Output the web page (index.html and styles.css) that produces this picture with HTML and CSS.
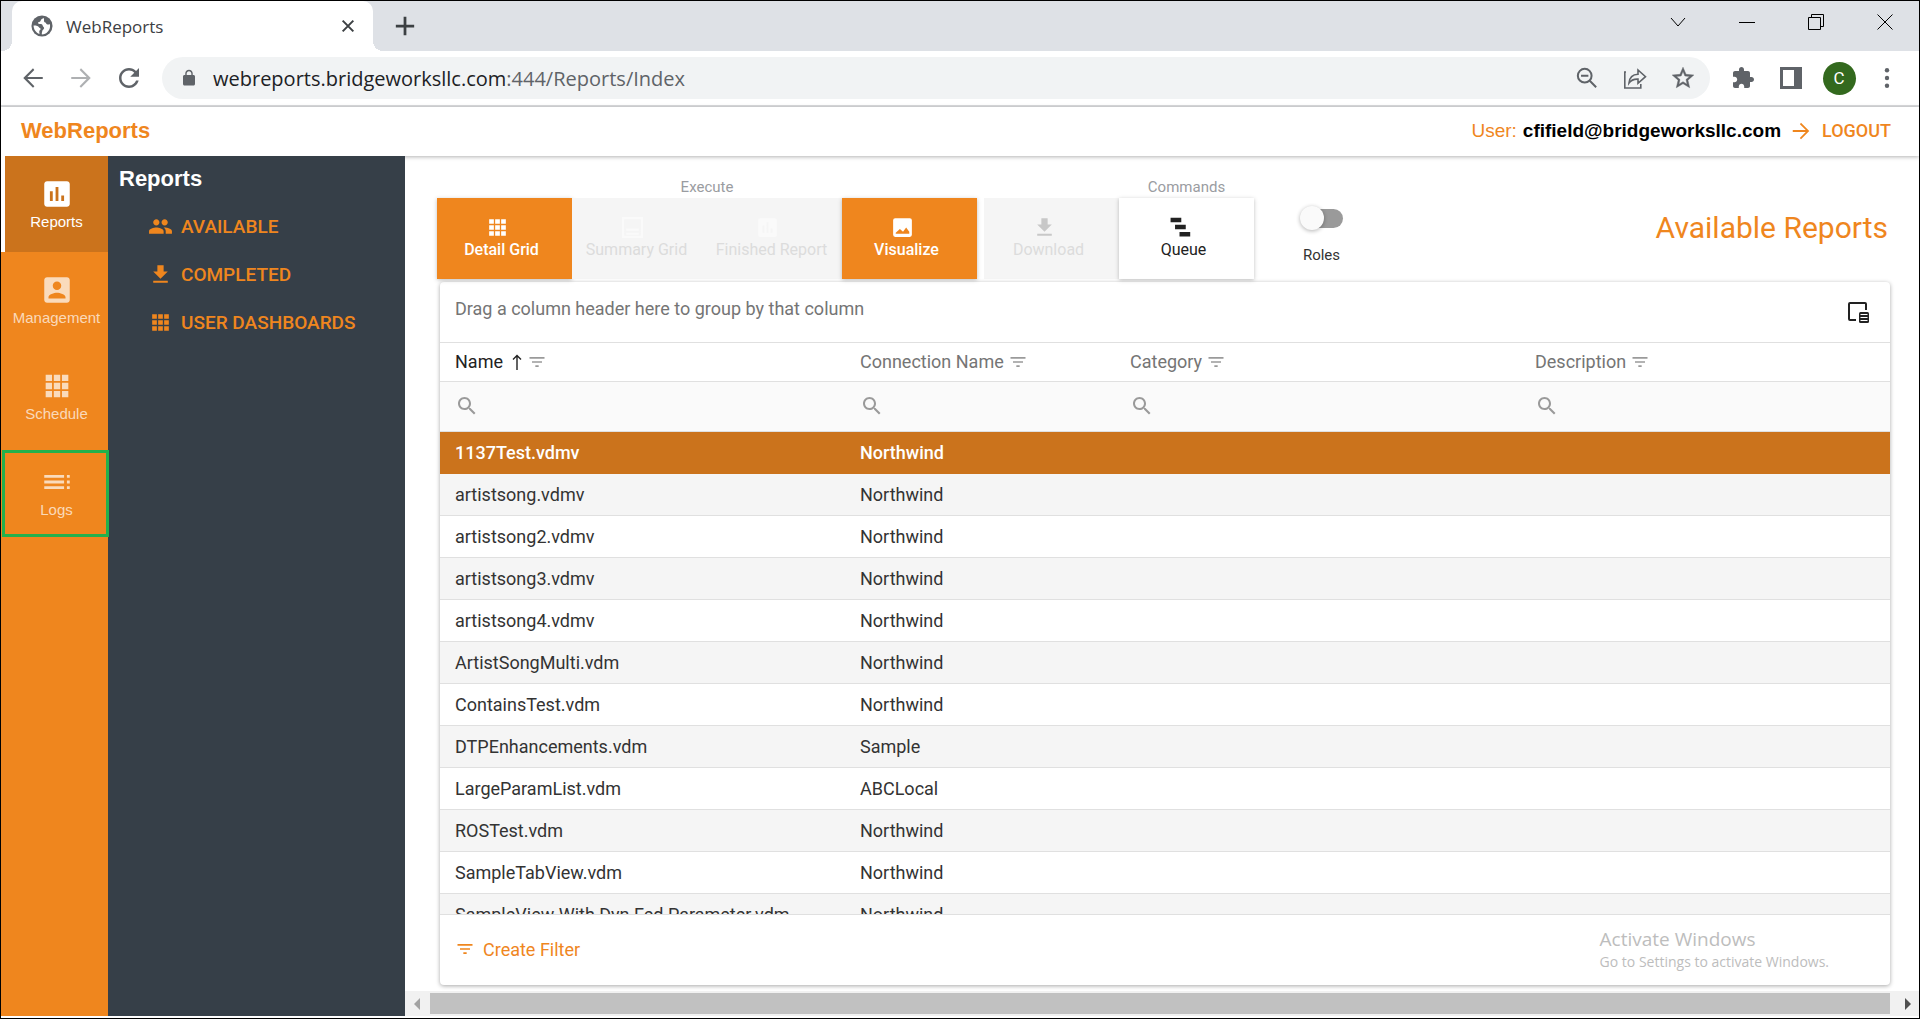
FILE: index.html
```html
<!DOCTYPE html>
<html lang="en">
<head>
  <meta charset="UTF-8" />
  <meta name="viewport" content="width=device-width, initial-scale=1.0"/>
  <title>WebReports</title>
  <link rel="stylesheet" href="styles.css">
</head>
<body>
  <!-- Icon shapes -->
  <svg class="sprite" aria-hidden="true">
    <symbol id="globe" viewBox="0 0 24 24"><circle cx="12" cy="12" r="11.500"/><path fill="#fff" d="M13.500 3c-.6 1.600-2.500 1.400-2.900 2.900-.3 1.300-1.600 1.400-2.600 1.900-1 .8.200 1.900 1.300 1.900 1.800-.1 3.200.3 3.400 1.700.2 1.500 1.800 1.700 1.600 3-.3 1.500-1.900 1.500-2 3-.1 1.300-.8 2-.4 3.900 5-.3 8.900-4.400 8.900-9.300 0-.8-.1-1.600-.3-2.300-1.200 1-3.300.9-3.900-.5-.4-1.200-1.600-.6-2.200-1.800-.7-1.500.600-2.400-.9-4.400zM2.800 11.500c2.200-.3 4.600.2 5.600 1.600.8 1.300 2.200 1 2.100 2.300-.1 1.200-1.700 1.300-1.500 3l.3 2.300c-3.800-1.200-6.400-4.800-6.500-9.200z"/></symbol>
    <symbol id="close" viewBox="0 0 24 24"><path fill="none" stroke="currentColor" stroke-width="3" d="M4 4l16 16M20 4L4 20"/></symbol>
    <symbol id="plus" viewBox="0 0 24 24"><path d="M10.500 2h3v8.500H22v3h-8.500V22h-3v-8.500H2v-3h8.500z"/></symbol>
    <symbol id="chevron" viewBox="0 0 16 16"><path fill="none" stroke="currentColor" d="M1 4l7 8 7-8"/></symbol>
    <symbol id="minimize" viewBox="0 0 16 16"><path d="M0 8h16v1H0z"/></symbol>
    <symbol id="restore" viewBox="0 0 16 16"><path fill="none" stroke="currentColor" d="M.5 3.500h12v12H.5zM3.500 3V.5h12v12H13"/></symbol>
    <symbol id="exit" viewBox="0 0 16 16"><path fill="none" stroke="currentColor" d="M.5 .5l15 15M15.500.5l-15 15"/></symbol>
    <symbol id="back" viewBox="0 0 24 24"><path d="M21 11H6.800l6.400-6.400L12 3l-9 9 9 9 1.300-1.500L6.800 13H21z"/></symbol>
    <symbol id="forward" viewBox="0 0 24 24"><path d="M3 11h14.200l-6.400-6.400L12 3l9 9-9 9-1.300-1.500 6.500-6.500H3z"/></symbol>
    <symbol id="reload" viewBox="0 0 24 24"><path d="M17.650 6.350C16.200 4.900 14.210 4 12 4c-4.420 0-7.990 3.580-7.990 8s3.570 8 7.990 8c3.730 0 6.840-2.550 7.730-6h-2.080c-.82 2.330-3.040 4-5.650 4-3.310 0-6-2.690-6-6s2.690-6 6-6c1.660 0 3.140.69 4.220 1.780L13 11h7V4l-2.350 2.350z"/></symbol>
    <symbol id="lock" viewBox="0 0 24 24"><path d="M18 8h-1V6c0-2.760-2.240-5-5-5S7 3.240 7 6v2H6c-1.100 0-2 .9-2 2v10c0 1.100.9 2 2 2h12c1.100 0 2-.9 2-2V10c0-1.100-.9-2-2-2zm-2.900 0H8.900V6c0-1.710 1.390-3.100 3.100-3.100s3.100 1.390 3.100 3.100v2z"/></symbol>
    <symbol id="zoom-out" viewBox="0 0 24 24"><g fill="none" stroke="currentColor" stroke-width="2.200"><circle cx="9.500" cy="9.500" r="7.500"/><path d="M5.500 9.500h8M15 15l7 7" /></g></symbol>
    <symbol id="share" viewBox="0 0 24 24"><path fill="none" stroke="currentColor" stroke-width="1.600" d="M3 6H1.800v16h16v-4M6 17c.5-5.500 3.500-8.500 9-8.700V4l7.500 6.700L15 17.300v-4.200c-4-.2-7 1-9 3.900z"/></symbol>
    <symbol id="star" viewBox="0 0 24 24"><path stroke="currentColor" stroke-width=".4" d="M22 9.240l-7.190-.62L12 2 9.190 8.630 2 9.240l5.460 4.730L5.820 21 12 17.270 18.180 21l-1.630-7.030L22 9.240zM12 15.400l-3.760 2.270 1-4.280-3.320-2.880 4.380-.38L12 6.100l1.710 4.040 4.380.38-3.320 2.880 1 4.280L12 15.400z"/></symbol>
    <symbol id="extension" viewBox="0 0 24 24"><path d="M20.500 11H19V7c0-1.100-.9-2-2-2h-4V3.500C13 2.120 11.880 1 10.500 1S8 2.120 8 3.500V5H4c-1.100 0-1.990.9-1.990 2v3.800H3.500c1.490 0 2.700 1.210 2.700 2.700s-1.210 2.700-2.700 2.700H2V20c0 1.100.9 2 2 2h3.800v-1.500c0-1.490 1.210-2.700 2.700-2.700 1.490 0 2.700 1.210 2.700 2.700V22H17c1.100 0 2-.9 2-2v-4h1.500c1.380 0 2.500-1.120 2.500-2.500S21.880 11 20.500 11z"/></symbol>
    <symbol id="sidepanel" viewBox="0 0 22 22"><path fill-rule="evenodd" d="M0 0h22v22H0zM3 3v16h11V3z"/></symbol>
    <symbol id="dots" viewBox="0 0 24 24"><circle cx="12" cy="3.500" r="2.400"/><circle cx="12" cy="12" r="2.400"/><circle cx="12" cy="20.500" r="2.400"/></symbol>
    <symbol id="chart" viewBox="0 0 24 24"><path d="M19 3H5c-1.100 0-2 .9-2 2v14c0 1.100.9 2 2 2h14c1.100 0 2-.9 2-2V5c0-1.100-.9-2-2-2zM9 17H7v-7h2v7zm4 0h-2V7h2v10zm4 0h-2v-4h2v4z"/></symbol>
    <symbol id="account" viewBox="0 0 24 24"><path d="M3 5v14c0 1.100.89 2 2 2h14c1.100 0 2-.9 2-2V5c0-1.100-.9-2-2-2H5c-1.110 0-2 .9-2 2zm12 4c0 1.660-1.340 3-3 3s-3-1.340-3-3 1.340-3 3-3 3 1.340 3 3zm-9 8c0-2 4-3.100 6-3.100s6 1.100 6 3.100v1H6v-1z"/></symbol>
    <symbol id="tiles" viewBox="0 0 24 24"><path d="M4 4h4.500v4.500H4zM9.750 4h4.500v4.500h-4.500zM15.500 4H20v4.500h-4.500zM4 9.750h4.500v4.500H4zM9.750 9.750h4.500v4.500h-4.500zM15.500 9.750H20v4.500h-4.500zM4 15.500h4.500V20H4zM9.750 15.500h4.500V20h-4.500zM15.500 15.500H20V20h-4.500z"/></symbol>
    <symbol id="toc" viewBox="0 0 24 24"><path d="M3 9h14V7H3v2zm0 4h14v-2H3v2zm0 4h14v-2H3v2zm16 0h2v-2h-2v2zm0-10v2h2V7h-2zm0 6h2v-2h-2v2z"/></symbol>
    <symbol id="people" viewBox="0 0 24 24"><path d="M16 11c1.660 0 2.990-1.340 2.990-3S17.660 5 16 5c-1.660 0-3 1.340-3 3s1.340 3 3 3zm-8 0c1.660 0 2.990-1.340 2.990-3S9.660 5 8 5C6.340 5 5 6.340 5 8s1.340 3 3 3zm0 2c-2.330 0-7 1.170-7 3.500V19h14v-2.500c0-2.330-4.670-3.500-7-3.500zm8 0c-.29 0-.62.02-.97.05 1.160.84 1.970 1.970 1.970 3.450V19h6v-2.500c0-2.330-4.670-3.500-7-3.500z"/></symbol>
    <symbol id="download" viewBox="0 0 24 24"><path d="M19 9h-4V3H9v6H5l7 7 7-7zM5 18v2h14v-2H5z"/></symbol>
    <symbol id="summary" viewBox="0 0 24 24"><path fill-rule="evenodd" d="M2 2h20v20H2zM4 4v16h16V4zM6 13h12v2H6zM6 17h12v2H6z"/></symbol>
    <symbol id="image" viewBox="0 0 24 24"><path fill-rule="evenodd" d="M5 3h14a2 2 0 0 1 2 2v14a2 2 0 0 1-2 2H5a2 2 0 0 1-2-2V5a2 2 0 0 1 2-2zM5.500 18h13v-2l-3-4-3 4-3-2.500-4 3.500z"/></symbol>
    <symbol id="queue" viewBox="0 0 28 28"><path d="M4 3h12v5H4zM9 11h12v5H9zM14 19h12v5H14z"/></symbol>
    <symbol id="filter" viewBox="0 0 24 24"><path d="M10 18h4v-2h-4v2zM3 6v2h18V6H3zm3 7h12v-2H6v2z"/></symbol>
    <symbol id="search" viewBox="0 0 24 24"><path d="M15.500 14h-.79l-.28-.27C15.410 12.590 16 11.110 16 9.500 16 5.910 13.090 3 9.500 3S3 5.910 3 9.500 5.910 16 9.500 16c1.610 0 3.090-.59 4.230-1.570l.27.28v.79l5 4.990L20.490 19l-4.990-5zm-6 0C7.010 14 5 11.990 5 9.500S7.010 5 9.500 5 14 7.010 14 9.500 11.990 14 9.500 14z"/></symbol>
    <symbol id="sort-up" viewBox="0 0 12 16"><path fill="none" stroke="currentColor" stroke-width="1.400" d="M6 16V2M2 5.500L6 1.500l4 4"/></symbol>
    <symbol id="chooser" viewBox="0 0 24 24"><path fill="none" stroke="currentColor" stroke-width="2" d="M10 20H4c-.6 0-1-.4-1-1V4c0-.6.4-1 1-1h15c.6 0 1 .4 1 1v6"/><rect x="13" y="12" width="10" height="11" rx="1.500"/><path stroke="#fff" d="M14.500 14.500h7M14.500 17.500h7M14.500 20.500h7"/></symbol>
  </svg>

  <div class="window">
    <!-- Tab strip -->
    <div class="tab-strip">
      <div class="tab">
        <svg class="icon-22"><use href="#globe"/></svg>
        <span class="tab-title">WebReports</span>
        <button class="tab-close" aria-label="Close tab"><svg class="icon-16"><use href="#close"/></svg></button>
      </div>
      <button class="new-tab" aria-label="New tab"><svg class="icon-22"><use href="#plus"/></svg></button>
      <div class="window-controls">
        <button aria-label="Search tabs"><svg class="icon-16"><use href="#chevron"/></svg></button>
        <button aria-label="Minimize"><svg class="icon-16"><use href="#minimize"/></svg></button>
        <button aria-label="Restore"><svg class="icon-16"><use href="#restore"/></svg></button>
        <button aria-label="Close"><svg class="icon-16"><use href="#exit"/></svg></button>
      </div>
    </div>

    <!-- Address bar -->
    <div class="toolbar">
      <button class="tool" aria-label="Back"><svg class="icon-26"><use href="#back"/></svg></button>
      <button class="tool faded" aria-label="Forward"><svg class="icon-26"><use href="#forward"/></svg></button>
      <button class="tool" aria-label="Reload"><svg class="icon-30"><use href="#reload"/></svg></button>
      <div class="address">
        <svg class="icon-18"><use href="#lock"/></svg>
        <span class="url">webreports.bridgeworksllc.com<span class="url-path">:444/Reports/Index</span></span>
        <button class="tool" aria-label="Zoom out"><svg class="icon-22"><use href="#zoom-out"/></svg></button>
        <button class="tool" aria-label="Share"><svg class="icon-24"><use href="#share"/></svg></button>
        <button class="tool" aria-label="Bookmark"><svg class="icon-26"><use href="#star"/></svg></button>
      </div>
      <button class="tool" aria-label="Extensions"><svg class="icon-24"><use href="#extension"/></svg></button>
      <button class="tool" aria-label="Side panel"><svg class="icon-22"><use href="#sidepanel"/></svg></button>
      <button class="tool" aria-label="Profile"><span class="avatar">C</span></button>
      <button class="tool" aria-label="Menu"><svg class="icon-22"><use href="#dots"/></svg></button>
    </div>

    <!-- App header -->
    <header class="app-header">
      <h1>WebReports</h1>
      <div class="account">
        <span>User:</span>
        <strong>cfifield@bridgeworksllc.com</strong>
        <a class="logout" href="#"><svg class="icon-22"><use href="#forward"/></svg>LOGOUT</a>
      </div>
    </header>

    <div class="app">
      <nav class="rail">
        <a class="rail-item active" href="#"><svg class="icon-34"><use href="#chart"/></svg>Reports</a>
        <a class="rail-item" href="#"><svg class="icon-34"><use href="#account"/></svg>Management</a>
        <a class="rail-item" href="#"><svg class="icon-34"><use href="#tiles"/></svg>Schedule</a>
        <a class="rail-item marked" href="#"><svg class="icon-34"><use href="#toc"/></svg>Logs</a>
      </nav>

      <aside class="panel">
        <h2>Reports</h2>
        <a class="panel-link" href="#"><svg class="icon-25"><use href="#people"/></svg>AVAILABLE</a>
        <a class="panel-link" href="#"><svg class="icon-25"><use href="#download"/></svg>COMPLETED</a>
        <a class="panel-link" href="#"><svg class="icon-25"><use href="#tiles"/></svg>USER DASHBOARDS</a>
      </aside>

      <main class="content">
        <div class="commands">
          <section class="group">
            <h3>Execute</h3>
            <div class="buttons">
              <button class="command primary"><svg class="icon-25"><use href="#tiles"/></svg>Detail Grid</button>
              <button class="command pale" disabled><svg class="icon-25"><use href="#summary"/></svg>Summary Grid</button>
              <button class="command pale" disabled><svg class="icon-25"><use href="#chart"/></svg>Finished Report</button>
              <button class="command primary"><svg class="icon-25"><use href="#image"/></svg>Visualize</button>
            </div>
          </section>
          <section class="group">
            <h3>Commands</h3>
            <div class="buttons">
              <button class="command" disabled><svg class="icon-25"><use href="#download"/></svg>Download</button>
              <button class="command raised"><svg class="icon-25"><use href="#queue"/></svg>Queue</button>
              <label class="roles"><input class="switch" type="checkbox" role="switch">Roles</label>
            </div>
          </section>
          <h2 class="page-title">Available Reports</h2>
        </div>

        <!-- Report grid -->
        <div class="grid">
          <div class="group-bar">
            <span>Drag a column header here to group by that column</span>
            <button aria-label="Column chooser"><svg class="icon-24"><use href="#chooser"/></svg></button>
          </div>
          <div class="rows">
            <table>
              <colgroup>
                <col class="col-wide"><col class="col-medium"><col class="col-wide"><col>
              </colgroup>
              <thead>
                <tr class="titles">
                  <th class="sorted">Name<svg class="sort"><use href="#sort-up"/></svg><svg class="icon-20"><use href="#filter"/></svg></th>
                  <th>Connection Name<svg class="icon-20"><use href="#filter"/></svg></th>
                  <th>Category<svg class="icon-20"><use href="#filter"/></svg></th>
                  <th>Description<svg class="icon-20"><use href="#filter"/></svg></th>
                </tr>
                <tr class="filters">
                  <td><label><svg class="icon-24"><use href="#search"/></svg><input type="text" aria-label="Filter name"></label></td>
                  <td><label><svg class="icon-24"><use href="#search"/></svg><input type="text" aria-label="Filter connection name"></label></td>
                  <td><label><svg class="icon-24"><use href="#search"/></svg><input type="text" aria-label="Filter category"></label></td>
                  <td><label><svg class="icon-24"><use href="#search"/></svg><input type="text" aria-label="Filter description"></label></td>
                </tr>
              </thead>
              <tbody>
                <tr class="selected"><td>1137Test.vdmv</td><td>Northwind</td><td></td><td></td></tr>
                <tr><td>artistsong.vdmv</td><td>Northwind</td><td></td><td></td></tr>
                <tr><td>artistsong2.vdmv</td><td>Northwind</td><td></td><td></td></tr>
                <tr><td>artistsong3.vdmv</td><td>Northwind</td><td></td><td></td></tr>
                <tr><td>artistsong4.vdmv</td><td>Northwind</td><td></td><td></td></tr>
                <tr><td>ArtistSongMulti.vdm</td><td>Northwind</td><td></td><td></td></tr>
                <tr><td>ContainsTest.vdm</td><td>Northwind</td><td></td><td></td></tr>
                <tr><td>DTPEnhancements.vdm</td><td>Sample</td><td></td><td></td></tr>
                <tr><td>LargeParamList.vdm</td><td>ABCLocal</td><td></td><td></td></tr>
                <tr><td>ROSTest.vdm</td><td>Northwind</td><td></td><td></td></tr>
                <tr><td>SampleTabView.vdm</td><td>Northwind</td><td></td><td></td></tr>
                <tr><td>SampleView With Dyn Fed Parameter.vdm</td><td>Northwind</td><td></td><td></td></tr>
              </tbody>
            </table>
          </div>
          <div class="filter-panel">
            <button class="create-filter"><svg class="icon-20"><use href="#filter"/></svg>Create Filter</button>
          </div>
        </div>

        <div class="scrollbar">
          <span class="arrow arrow-left"></span>
          <span class="thumb"></span>
          <span class="arrow arrow-right"></span>
        </div>
      </main>
    </div>

    <!-- Desktop watermark -->
    <div class="watermark">
      <p class="watermark-title">Activate Windows</p>
      <p>Go to Settings to activate Windows.</p>
    </div>
  </div>
</body>
</html>
```

FILE: styles.css
```css
* {
  box-sizing: border-box;
}

body {
  margin: 0;
  background-color: #fff;
  font-family: Roboto, sans-serif;
  font-size: 18px;
  color: #333;
}

h1, h2, h3, p {
  margin: 0;
}

a {
  text-decoration: none;
}

button {
  padding: 0;
  border: none;
  background: none;
  font-family: inherit;
  color: inherit;
  cursor: pointer;
}

svg {
  fill: currentColor;
  flex: none;
}

.sprite {
  display: none;
}

.icon-16 { width: 16px; height: 16px; }
.icon-18 { width: 18px; height: 18px; }
.icon-20 { width: 20px; height: 20px; }
.icon-22 { width: 22px; height: 22px; }
.icon-24 { width: 24px; height: 24px; }
.icon-25 { width: 25px; height: 25px; }
.icon-26 { width: 26px; height: 26px; }
.icon-30 { width: 30px; height: 30px; }
.icon-34 { width: 34px; height: 34px; }

.window {
  position: relative;
  display: flex;
  flex-direction: column;
  height: calc(100vh - 1px);
  padding-bottom: 2px;
  border: 1px solid #000;
}

/* Browser tabs */
.tab-strip {
  display: flex;
  height: 50px;
  padding-left: 11px;
  background-color: #dee1e6;
  color: #3c4043;
}

.tab {
  position: relative;
  display: flex;
  align-items: center;
  width: 361px;
  padding: 0 17px 0 19px;
  border-radius: 10px 10px 0 0;
  background-color: #fff;
  font-family: "Open Sans", sans-serif;
  font-size: 17px;
}

/* Flared feet of the active tab */
.tab::before,
.tab::after {
  content: "";
  position: absolute;
  bottom: 0;
  width: 10px;
  height: 10px;
}

.tab::before {
  right: 100%;
  background: radial-gradient(circle at 0 0, transparent 10px, #fff 10px);
}

.tab::after {
  left: 100%;
  background: radial-gradient(circle at 100% 0, transparent 10px, #fff 10px);
}

.tab > svg {
  color: #5f6368;
}

.tab-title {
  flex: 1;
  margin-left: 13px;
}

.tab-close {
  display: flex;
}

.new-tab {
  display: flex;
  align-items: center;
  margin-left: 21px;
}

.window-controls {
  display: flex;
  margin-left: auto;
  height: 41px;
  color: #000;
}

.window-controls button {
  width: 69px;
}

.window-controls svg {
  display: block;
  margin: auto;
}

.toolbar {
  display: flex;
  align-items: center;
  height: 56px;
  padding: 0 8px;
  border-bottom: 2px solid #dadbdd;
  color: #5f6368;
}

.tool {
  display: flex;
  align-items: center;
  justify-content: center;
  width: 48px;
  height: 42px;
}

.faded {
  opacity: 0.5;
}

.address {
  display: flex;
  align-items: center;
  flex: 1;
  height: 42px;
  margin: 0 9px;
  padding: 0 3px 0 18px;
  border-radius: 21px;
  background-color: #f1f3f4;
}

.url {
  flex: 1;
  margin-left: 15px;
  font-family: "Open Sans", sans-serif;
  font-size: 20px;
  color: #202124;
}

.url-path {
  color: #5f6368;
}

.avatar {
  width: 33px;
  border-radius: 50%;
  background-color: #33691e;
  color: #fff;
  font-size: 17px;
  line-height: 33px;
}

/* Application header */
.app-header {
  z-index: 1;
  display: flex;
  justify-content: space-between;
  align-items: center;
  height: 49px;
  padding: 0 28px 2px 20px;
  background-color: #fff;
  box-shadow: 0 1px 4px rgba(0, 0, 0, 0.3);
  font-family: "Liberation Sans", Arial, sans-serif;
  font-size: 19px;
  color: #ef861e;
}

.app-header h1 {
  font-size: 22px;
}

.account {
  display: flex;
  align-items: center;
  gap: 6px;
}

.account strong {
  color: #000;
}

.logout {
  display: flex;
  align-items: center;
  gap: 10px;
  margin-left: 3px;
  font-family: Roboto, sans-serif;
  font-size: 18px;
  font-weight: 500;
  color: #ef861e;
}

.app {
  display: flex;
  flex: 1;
  min-height: 0;
}

.rail {
  position: relative;
  z-index: 2;
  width: 107px;
  background-color: #ef861e;
  font-family: "Liberation Sans", Arial, sans-serif;
  font-size: 15px;
}

.rail-item {
  display: flex;
  flex-direction: column;
  align-items: center;
  gap: 2px;
  height: 96px;
  padding: 21px 0 0 4px;
  color: rgba(255, 255, 255, 0.7);
}

.rail-item.active {
  border-left: 4px solid #fff;
  padding-left: 0;
  background-color: #cb731c;
  color: #fff;
}

.rail-item.marked {
  height: 87px;
  margin: 6px -1px 0 1px;
  padding: 12px 0 0 2px;
  border: 3px solid #22b14c;
}

.panel {
  position: relative;
  z-index: 1;
  width: 297px;
  padding: 10px 11px;
  background-color: #363f48;
  color: #fff;
}

.panel h2 {
  margin-bottom: 10px;
  font-family: "Liberation Sans", Arial, sans-serif;
  font-size: 22px;
  line-height: 26px;
}

.panel-link {
  display: flex;
  align-items: center;
  gap: 8px;
  height: 48px;
  padding-left: 29px;
  font-size: 19px;
  font-weight: 500;
  color: #ef861e;
}

.content {
  display: flex;
  flex-direction: column;
  flex: 1;
  min-width: 0;
}

.commands {
  display: flex;
  gap: 7px;
  padding: 21px 31px 0 32px;
}

.group h3 {
  height: 21px;
  text-align: center;
  font-size: 15px;
  font-weight: 400;
  line-height: 20px;
  color: #9a9ca1;
}

.buttons {
  display: flex;
}

.command {
  display: flex;
  flex-direction: column;
  align-items: center;
  justify-content: center;
  width: 135px;
  height: 81px;
  padding: 0 6px 3px 0;
  background-color: #f5f5f5;
  font-size: 16px;
  white-space: nowrap;
  color: #222;
}

.command svg {
  margin-right: 8px;
}

.command:disabled {
  color: #dcdcdc;
}

.command:disabled svg {
  color: #c8c8c8;
}

.command.pale svg {
  color: #fafafa;
}

.command.primary {
  background-color: #ef861e;
  box-shadow: 0 1px 4px rgba(0, 0, 0, 0.25);
  font-weight: 500;
  color: #fff;
}

.command.raised {
  background-color: #fff;
  box-shadow: 0 1px 4px rgba(0, 0, 0, 0.25);
}

.roles {
  display: flex;
  flex-direction: column;
  align-items: center;
  gap: 16px;
  width: 135px;
  padding-top: 8px;
  font-size: 15px;
}

/* Toggle: grey track with a round knob */
.switch {
  position: relative;
  width: 43px;
  height: 24px;
  margin: 0;
  appearance: none;
}

.switch::before {
  content: "";
  position: absolute;
  inset: 3px 0 2px 4px;
  border-radius: 10px;
  background-color: #9a9a9a;
}

.switch::after {
  content: "";
  position: absolute;
  top: 0;
  left: 0;
  width: 24px;
  height: 24px;
  border-radius: 50%;
  background-color: #fafafa;
  box-shadow: 0 1px 4px rgba(0, 0, 0, 0.3);
}

.page-title {
  margin-left: auto;
  padding-top: 33px;
  font-size: 30px;
  font-weight: 400;
  line-height: 36px;
  color: #ef861e;
}

/* Data grid */
.grid {
  display: flex;
  flex-direction: column;
  flex: 1;
  min-height: 0;
  margin: 3px 29px 6px 35px;
  border-radius: 4px;
  box-shadow: 0 1px 4px rgba(0, 0, 0, 0.35);
}

.group-bar {
  display: flex;
  justify-content: space-between;
  height: 60px;
  padding: 16px 20px 0 15px;
  color: #757575;
}

.group-bar button {
  height: 30px;
  color: #222;
}

.rows {
  flex: 1;
  min-height: 0;
  overflow: hidden;
  border-top: 1px solid #e0e0e0;
  border-bottom: 1px solid #e0e0e0;
}

table {
  width: 100%;
  table-layout: fixed;
  border-collapse: separate;
  border-spacing: 0;
}

.col-wide {
  width: 405px;
}

.col-medium {
  width: 270px;
}

th, td {
  height: 42px;
  padding: 0 15px;
  border-bottom: 1px solid #e0e0e0;
  text-align: left;
  white-space: nowrap;
}

.titles th {
  height: 39px;
  padding-bottom: 2px;
  font-weight: 400;
  color: #757575;
}

.titles svg {
  margin-left: 4px;
  vertical-align: -4px;
  color: #9a9a9a;
}

.titles .sorted,
.titles .sort {
  color: #222;
}

.titles .sort {
  width: 12px;
  height: 16px;
  margin-left: 8px;
  vertical-align: -2px;
}

.filters td {
  height: 50px;
  padding-bottom: 2px;
  background-color: #fafafa;
}

.filters label {
  display: flex;
  align-items: center;
  color: #9a9a9a;
}

.filters input {
  flex: 1;
  min-width: 0;
  border: none;
  background: none;
  font: inherit;
}

tbody tr:nth-child(even) {
  background-color: #f5f5f5;
}

tbody .selected {
  background-color: #cb731c;
  font-weight: 500;
  color: #fff;
}

.selected td {
  border-bottom-color: #cb731c;
}

.filter-panel {
  display: flex;
  align-items: center;
  height: 70px;
  padding: 0 15px 2px;
}

.create-filter {
  display: flex;
  align-items: center;
  gap: 8px;
  font-size: 18px;
  color: #ef861e;
}

.scrollbar {
  display: flex;
  height: 25px;
  padding: 2px 0;
  background-color: #f1f1f1;
}

.thumb {
  flex: 1;
  background-color: #c1c1c1;
}

.arrow {
  width: 25px;
  padding: 5px 9px;
}

.arrow::before {
  content: "";
  display: block;
  width: 0;
  border: 6px solid transparent;
}

.arrow-left::before {
  border-left: none;
  border-right-color: #a3a3a3;
}

.arrow-right {
  width: 29px;
  padding-left: 15px;
}

.arrow-right::before {
  border-right: none;
  border-left-color: #505050;
}

.watermark {
  position: absolute;
  right: 90px;
  bottom: 46px;
  z-index: 3;
  font-family: "Open Sans", sans-serif;
  font-size: 14px;
  line-height: 20px;
  color: #bdbdbd;
}

.watermark-title {
  font-size: 19px;
  line-height: 26px;
}
```
